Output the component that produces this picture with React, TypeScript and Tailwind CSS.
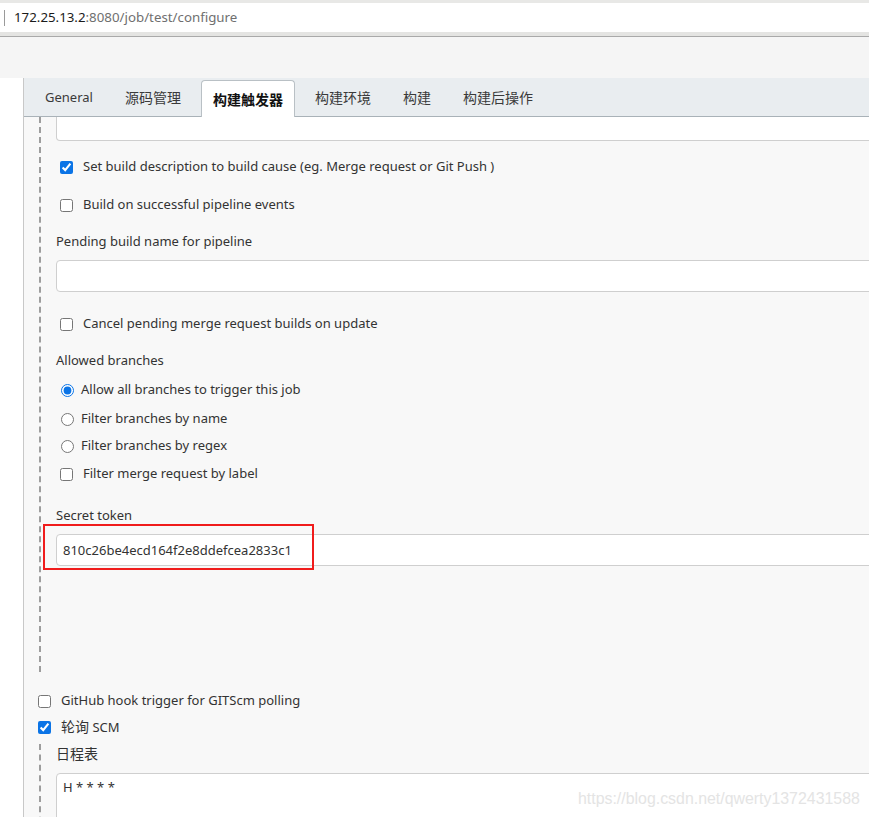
import { ReactNode } from 'react'

const tabs = ['General', '源码管理', '构建触发器', '构建环境', '构建', '构建后操作']

function Check({ checked, label }: { checked?: boolean; label: ReactNode }) {
  return (
    <label className="flex h-5 items-center">
      <input
        type="checkbox"
        defaultChecked={checked}
        className="m-0 h-[13px] w-[13px] accent-[#0b74e6]"
      />
      <span className="ml-[10px]">{label}</span>
    </label>
  )
}

function Radio({ checked, label }: { checked?: boolean; label: string }) {
  return (
    <label className="flex h-5 items-center">
      <input
        type="radio"
        name="branches"
        defaultChecked={checked}
        className="m-0 ml-[1px] h-[13px] w-[13px] accent-[#0b74e6]"
      />
      <span className="ml-[7px]">{label}</span>
    </label>
  )
}

function Field({ children, className = '' }: { children?: ReactNode; className?: string }) {
  return (
    <div
      className={`h-[32px] w-[900px] rounded-[4px] border border-[#cfcfcf] bg-white px-[6px] leading-[30px] ${className}`}
    >
      {children}
    </div>
  )
}

export default function App() {
  return (
    <div
      className="relative h-[817px] w-[869px] overflow-hidden bg-white text-[13px] text-[#333]"
      style={{ fontFamily: '"Noto Sans", "Noto Sans CJK SC", sans-serif' }}
    >
      <div className="h-[3px] bg-[#e8e8e6]" />
      <div className="flex h-[29px] items-center bg-white text-[13.3px]">
        <div className="ml-[4px] h-[16px] w-px bg-[#9a9a9a]" />
        <span className="ml-[9px] text-[#1b1b1b]">172.25.13.2</span>
        <span className="text-[#6f6f6f]">:8080/job/test/configure</span>
      </div>
      <div className="h-[5px] border-b border-[#a9a9a9] bg-[#e4e4e2]" />
      <div className="h-[41px] bg-[#f5f5f5]" />

      <div className="flex">
        <div className="w-[23px] shrink-0 bg-white" />
        <div className="min-h-[740px] flex-1 border-l border-[#c8c8c8] bg-[#f8f8f8]">
          <div className="flex h-[39px] items-end gap-[8px] border-b border-[#a9b2b8] bg-[#e9edf0] pl-[9px]">
            {tabs.map((t) =>
              t === '构建触发器' ? (
                <div
                  key={t}
                  className="-mb-px flex h-[37px] items-center rounded-t-[4px] border border-b-0 border-[#b9c0c5] bg-white px-[11px] text-[14px] font-bold text-[#111]"
                >
                  {t}
                </div>
              ) : (
                <div
                  key={t}
                  className={`flex h-[37px] items-center px-3 text-[#3a3a3a] ${t === 'General' ? 'pt-[1px]' : 'text-[14px]'}`}
                >
                  {t}
                </div>
              )
            )}
          </div>

          <div className="ml-[15px] border-l-2 border-dashed border-[#9d9d9d] pb-[106px] pl-[15px]">
            <div className="h-[24px] w-[900px] rounded-b-[4px] border border-t-0 border-[#cfcfcf] bg-white" />
            <div className="ml-[4px] mt-[16px]">
              <Check checked label="Set build description to build cause (eg. Merge request or Git Push )" />
            </div>
            <div className="ml-[4px] mt-[18px]">
              <Check label="Build on successful pipeline events" />
            </div>
            <div className="mt-[16px] h-5 leading-5">Pending build name for pipeline</div>
            <Field className="mt-[9px]" />
            <div className="ml-[4px] mt-[22px]">
              <Check label="Cancel pending merge request builds on update" />
            </div>
            <div className="mt-[16px] h-5 leading-5">Allowed branches</div>
            <div className="ml-[4px] mt-[10px]">
              <Radio checked label="Allow all branches to trigger this job" />
            </div>
            <div className="ml-[4px] mt-[9px]">
              <Radio label="Filter branches by name" />
            </div>
            <div className="ml-[4px] mt-[7px]">
              <Radio label="Filter branches by regex" />
            </div>
            <div className="ml-[4px] mt-[8px]">
              <Check label="Filter merge request by label" />
            </div>
            <div className="mt-[21px] h-5 leading-5">Secret token</div>
            <div className="relative mt-[9px]">
              <Field>810c26be4ecd164f2e8ddefcea2833c1</Field>
              <div className="absolute left-[-13px] top-[-10px] h-[46px] w-[271px] border-2 border-[#f01c1c]" />
            </div>
          </div>

          <div className="ml-[14px] mt-[19px]">
            <Check label="GitHub hook trigger for GITScm polling" />
          </div>
          <div className="ml-[14px] mt-[6px]">
            <Check
              checked
              label={
                <>
                  <span className="text-[14px]">轮询</span> SCM
                </>
              }
            />
          </div>

          <div className="ml-[15px] mt-[7px] border-l-2 border-dashed border-[#9d9d9d] pl-[15px]">
            <div className="h-5 text-[14px] leading-5">日程表</div>
            <div className="mt-[9px] h-[60px] w-[900px] rounded-[4px] border border-[#cfcfcf] bg-white px-[6px] pt-[4px]">
              H * * * *
            </div>
          </div>
        </div>
      </div>

      <div
        className="absolute left-[578px] top-[787px] text-[15.9px] text-[#e4e4e4]"
        style={{ fontFamily: '"Liberation Sans", sans-serif' }}
      >
        https://blog.csdn.net/qwerty1372431588
      </div>
    </div>
  )
}
